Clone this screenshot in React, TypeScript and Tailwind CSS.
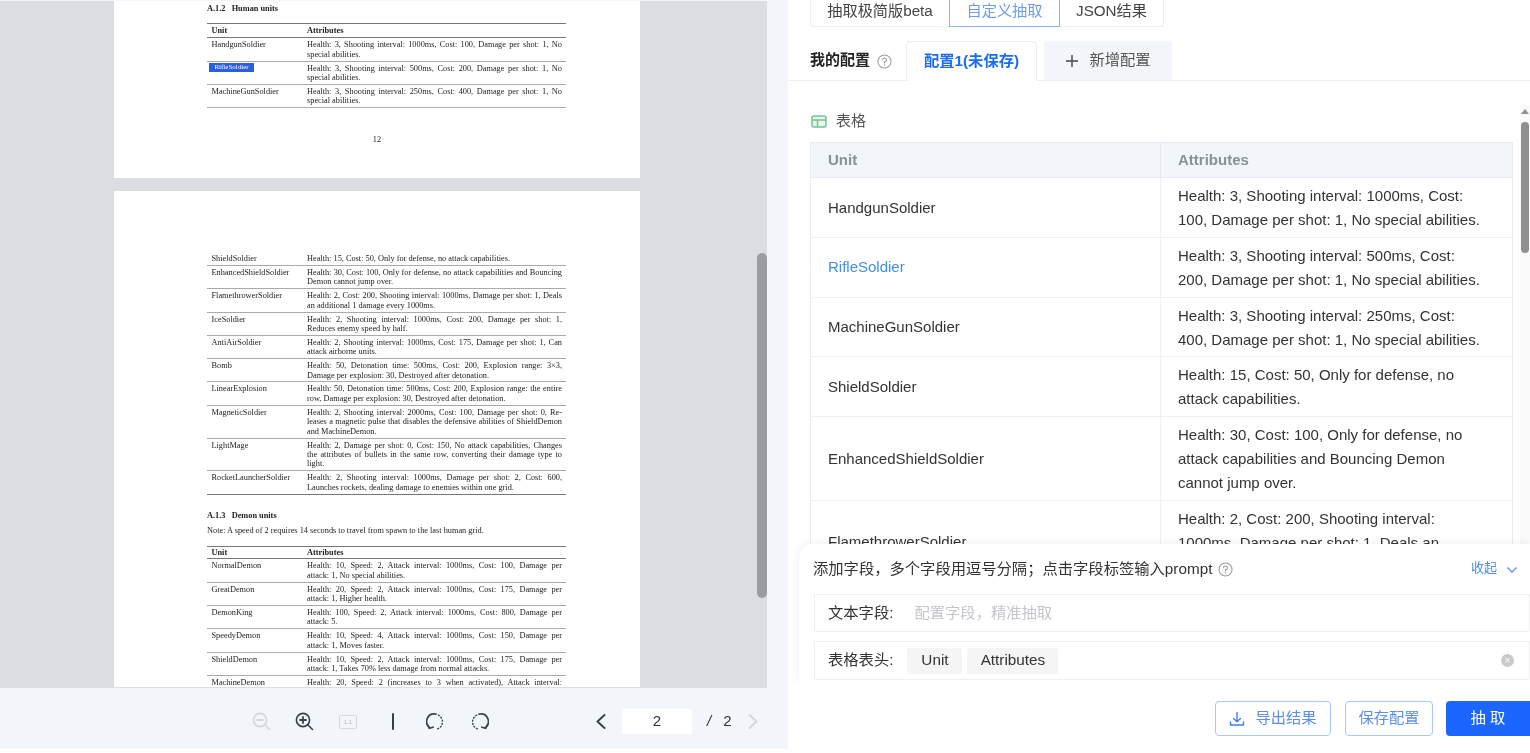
import React from "react";

const sans = "font-['Liberation_Sans','Noto_Sans_CJK_SC',sans-serif]";

type PdfRowData = { name: string; lines: string[]; mark?: boolean };

const human: PdfRowData[] = [
  { name: "HandgunSoldier", lines: ["Health: 3, Shooting interval: 1000ms, Cost: 100, Damage per shot: 1, No", "special abilities."] },
  { name: "RifleSoldier", mark: true, lines: ["Health: 3, Shooting interval: 500ms, Cost: 200, Damage per shot: 1, No", "special abilities."] },
  { name: "MachineGunSoldier", lines: ["Health: 3, Shooting interval: 250ms, Cost: 400, Damage per shot: 1, No", "special abilities."] },
];

const human2: PdfRowData[] = [
  { name: "ShieldSoldier", lines: ["Health: 15, Cost: 50, Only for defense, no attack capabilities."] },
  { name: "EnhancedShieldSoldier", lines: ["Health: 30, Cost: 100, Only for defense, no attack capabilities and Bouncing", "Demon cannot jump over."] },
  { name: "FlamethrowerSoldier", lines: ["Health: 2, Cost: 200, Shooting interval: 1000ms, Damage per shot: 1, Deals", "an additional 1 damage every 1000ms."] },
  { name: "IceSoldier", lines: ["Health: 2, Shooting interval: 1000ms, Cost: 200, Damage per shot: 1,", "Reduces enemy speed by half."] },
  { name: "AntiAirSoldier", lines: ["Health: 2, Shooting interval: 1000ms, Cost: 175, Damage per shot: 1, Can", "attack airborne units."] },
  { name: "Bomb", lines: ["Health: 50, Detonation time: 500ms, Cost: 200, Explosion range: 3×3,", "Damage per explosion: 30, Destroyed after detonation."] },
  { name: "LinearExplosion", lines: ["Health: 50, Detonation time: 500ms, Cost: 200, Explosion range: the entire", "row, Damage per explosion: 30, Destroyed after detonation."] },
  { name: "MagneticSoldier", lines: ["Health: 2, Shooting interval: 2000ms, Cost: 100, Damage per shot: 0, Re-", "leases a magnetic pulse that disables the defensive abilities of ShieldDemon", "and MachineDemon."] },
  { name: "LightMage", lines: ["Health: 2, Damage per shot: 0, Cost: 150, No attack capabilities, Changes", "the attributes of bullets in the same row, converting their damage type to", "light."] },
  { name: "RocketLauncherSoldier", lines: ["Health: 2, Shooting interval: 1000ms, Damage per shot: 2, Cost: 600,", "Launches rockets, dealing damage to enemies within one grid."] },
];

const demons: PdfRowData[] = [
  { name: "NormalDemon", lines: ["Health: 10, Speed: 2, Attack interval: 1000ms, Cost: 100, Damage per", "attack: 1, No special abilities."] },
  { name: "GreatDemon", lines: ["Health: 20, Speed: 2, Attack interval: 1000ms, Cost: 175, Damage per", "attack: 1, Higher health."] },
  { name: "DemonKing", lines: ["Health: 100, Speed: 2, Attack interval: 1000ms, Cost: 800, Damage per", "attack: 5."] },
  { name: "SpeedyDemon", lines: ["Health: 10, Speed: 4, Attack interval: 1000ms, Cost: 150, Damage per", "attack: 1, Moves faster."] },
  { name: "ShieldDemon", lines: ["Health: 10, Speed: 2, Attack interval: 1000ms, Cost: 175, Damage per", "attack: 1, Takes 70% less damage from normal attacks."] },
];

function PdfRow({ row, last }: { row: PdfRowData; last?: boolean }) {
  return (
    <div className={`flex pt-[2px] pb-[1.5px] leading-[9.4px] border-b ${last ? "border-[#777]" : "border-[#aaa]"}`}>
      <div className="w-[100px] shrink-0 pl-[4.5px]">
        {row.mark ? (
          <span className="-ml-[2.5px] -mt-px block w-[45px] bg-[#2a5fe0] text-center text-[7px] leading-[9px] text-white">RifleSoldier</span>
        ) : (
          row.name
        )}
      </div>
      <div className="w-[255px]">
        {row.lines.map((l, i) => (
          <div key={i} className={i < row.lines.length - 1 ? "text-justify [text-align-last:justify]" : ""}>
            {l}
          </div>
        ))}
      </div>
    </div>
  );
}

function PdfHead({ compact }: { compact?: boolean }) {
  return (
    <div className={`flex border-y border-y-[#777] leading-[9.4px] font-bold ${compact ? "py-[1.2px]" : "py-[2px]"}`}>
      <div className="w-[100px] shrink-0 pl-[4.5px]">Unit</div>
      <div>Attributes</div>
    </div>
  );
}

function PdfViewer() {
  return (
    <div className="relative mt-px h-[687px] w-[767px] shrink-0 overflow-hidden bg-[#dcdde2]">
      <div className="flex flex-col gap-[13px] pl-[114px] font-['Liberation_Serif',serif] text-[8.3px] text-[#222] blur-[0.45px]">
        <div className="h-[177px] w-[526px] bg-white pl-[93px] pt-[3px]">
          <div className="h-[19px] w-[359px] font-bold leading-[10px]">A.1.2 &nbsp; Human units</div>
          <div className="w-[359px]">
            <PdfHead />
            {human.map((r) => (
              <PdfRow key={r.name} row={r} />
            ))}
          </div>
          <div className="w-[340px] pt-[26px] text-center">12</div>
        </div>
        <div className="w-[526px] bg-white pl-[93px] pt-[61px]">
          <div className="w-[359px]">
            {human2.map((r, i) => (
              <PdfRow key={r.name} row={r} last={i === human2.length - 1} />
            ))}
          </div>
          <div className="pt-[16px] font-bold leading-[10px]">A.1.3 &nbsp; Demon units</div>
          <div className="pt-[5px] leading-[10px]">Note: A speed of 2 requires 14 seconds to travel from spawn to the last human grid.</div>
          <div className="mt-[10px] w-[359px]">
            <PdfHead compact />
            {demons.map((r) => (
              <PdfRow key={r.name} row={r} />
            ))}
            <div className="flex pt-[2px] leading-[9.4px]">
              <div className="w-[100px] shrink-0 pl-[4.5px]">MachineDemon</div>
              <div className="w-[255px] text-justify [text-align-last:justify]">Health: 20, Speed: 2 (increases to 3 when activated), Attack interval:</div>
            </div>
          </div>
        </div>
      </div>
      <div className="absolute left-[757px] top-[252px] h-[345px] w-[10px] rounded-[5px] bg-[#9b9ca0]" />
    </div>
  );
}

function Mag({ color, plus }: { color: string; plus?: boolean }) {
  return (
    <svg width="19" height="19" viewBox="0 0 19 19" fill="none" stroke={color} strokeWidth="1.6" strokeLinecap="round">
      <circle cx="8" cy="8" r="6.6" />
      <path d="M13 13l4.5 4.5" />
      <path d="M5 8h6" strokeWidth="1.8" />
      {plus && <path d="M8 5v6" strokeWidth="1.8" />}
    </svg>
  );
}

function Rotate({ flip }: { flip?: boolean }) {
  return (
    <svg width="18" height="19" viewBox="0 0 18 19" fill="none" stroke="#3a3f4a" strokeLinecap="round" className={flip ? "-scale-x-100" : ""}>
      <path d="M3.6 15.6A7.6 7.6 0 0 1 9 2a7 7 0 0 1 1 .1" strokeWidth="1.7" />
      <path d="M12.4 3.2a7.6 7.6 0 0 1 2.6 11.2a7.6 7.6 0 0 1-4 2.6" strokeWidth="1.4" strokeDasharray="1 2.2" />
      <path d="M1.5 12.5l1.8 3.7l3.8-1" strokeWidth="1.7" />
    </svg>
  );
}

function Chevron({ color, left }: { color: string; left?: boolean }) {
  return (
    <svg width="12" height="17" viewBox="0 0 12 17" fill="none" stroke={color} strokeWidth="1.9" strokeLinecap="round" strokeLinejoin="round">
      <path d={left ? "M9.5 2L2.5 8.5L9.5 15" : "M2.5 2L9.5 8.5L2.5 15"} />
    </svg>
  );
}

function Toolbar() {
  return (
    <div className={`flex h-[61px] items-center pl-[252px] pt-[6px] ${sans}`}>
      <Mag color="#d2d5da" />
      <div className="ml-[24px]"><Mag color="#3a3f4a" plus /></div>
      <div className="ml-[25px] flex h-[14px] w-[18px] items-center justify-center rounded-[2px] border-[1.5px] border-[#d5d8dd] text-[6px] leading-none text-[#b8bbc0]">1:1</div>
      <div className="ml-[35px] h-[17px] w-[2px] rounded bg-[#3a3f4a]" />
      <div className="ml-[32px]"><Rotate /></div>
      <div className="ml-[27px]"><Rotate flip /></div>
      <div className="ml-[106px]"><Chevron color="#3a3f4a" left /></div>
      <div className="ml-[15px] flex h-[25px] w-[70px] items-center justify-center bg-white text-[15px] text-[#333]">2</div>
      <div className="ml-[15px] text-[15px] italic text-[#333]">/</div>
      <div className="ml-[12px] text-[15px] text-[#333]">2</div>
      <div className="ml-[15px]"><Chevron color="#d2d5da" /></div>
    </div>
  );
}

function Help({ size = 15 }: { size?: number }) {
  return (
    <svg width={size} height={size} viewBox="0 0 16 16" fill="none" stroke="#9a9a9a">
      <circle cx="8" cy="8" r="7" strokeWidth="1.1" />
      <path d="M5.9 6.2A2.1 2.1 0 1 1 8 8.4v1.2" strokeWidth="1.1" strokeLinecap="round" />
      <circle cx="8" cy="11.7" r="0.7" fill="#9a9a9a" stroke="none" />
    </svg>
  );
}

const tableRows: { name: string; attr: string; link?: boolean }[] = [
  { name: "HandgunSoldier", attr: "Health: 3, Shooting interval: 1000ms, Cost: 100, Damage per shot: 1, No special abilities." },
  { name: "RifleSoldier", link: true, attr: "Health: 3, Shooting interval: 500ms, Cost: 200, Damage per shot: 1, No special abilities." },
  { name: "MachineGunSoldier", attr: "Health: 3, Shooting interval: 250ms, Cost: 400, Damage per shot: 1, No special abilities." },
  { name: "ShieldSoldier", attr: "Health: 15, Cost: 50, Only for defense, no attack capabilities." },
  { name: "EnhancedShieldSoldier", attr: "Health: 30, Cost: 100, Only for defense, no attack capabilities and Bouncing Demon cannot jump over." },
  { name: "FlamethrowerSoldier", attr: "Health: 2, Cost: 200, Shooting interval: 1000ms, Damage per shot: 1, Deals an additional 1 damage every 1000ms." },
];

function DataTable() {
  return (
    <div className="ml-[22px] mt-[11px] w-[703px] border-x border-t border-[#e9ecf1] text-[15px]">
      <div className="flex h-[35px] items-center border-b border-[#e9ecf1] bg-[#f2f5fa] font-bold text-[#8a8f99]">
        <div className="flex h-full w-[350px] items-center border-r border-[#e4e7ec] pl-[17px]">Unit</div>
        <div className="pl-[17px]">Attributes</div>
      </div>
      {tableRows.map((r) => (
        <div key={r.name} className="flex border-b border-[#eef0f3] text-[#333]">
          <div className={`flex w-[350px] shrink-0 items-center border-r border-[#eef0f3] pl-[17px] pt-px ${r.link ? "text-[#3d8ff0]" : ""}`}>{r.name}</div>
          <div className="w-[326px] pb-[4.75px] pl-[17px] pt-[6px] leading-[24px]">{r.attr}</div>
        </div>
      ))}
    </div>
  );
}

function AddFieldPanel() {
  return (
    <div className="absolute bottom-0 left-[11px] right-0 top-[544px] rounded-tl-[14px] bg-white pl-[15px] shadow-[-2px_-2px_8px_rgba(0,0,0,0.05)]">
      <div className="-ml-px flex h-[50px] items-center pt-px text-[15.3px] text-[#333]">
        <span>添加字段，多个字段用逗号分隔；点击字段标签输入prompt</span>
        <span className="ml-[6px]"><Help /></span>
        <span className="ml-auto -mt-[3px] text-[13px] text-[#4a8df0]">收起</span>
        <svg className="ml-[9px] mr-[12px]" width="12" height="8" viewBox="0 0 12 8" fill="none" stroke="#4a8df0" strokeWidth="1.2"><path d="M1.5 1.5L6 6.2L10.5 1.5" /></svg>
      </div>
      <div className="flex h-[38px] items-center border border-[#eef0f3] pl-[13px] text-[15.3px]">
        <span className="text-[#333]">文本字段:</span>
        <span className="ml-[21px] text-[#c4c6ca]">配置字段，精准抽取</span>
      </div>
      <div className="mt-[9px] flex h-[39px] items-center border border-[#eef0f3] pl-[13px] text-[15.3px] text-[#333]">
        <span>表格表头:</span>
        <span className="ml-[14px] flex h-[26px] w-[55px] items-center justify-center rounded-[2px] bg-[#f5f5f5]">Unit</span>
        <span className="ml-[5px] flex h-[26px] w-[91px] items-center justify-center rounded-[2px] bg-[#f5f5f5]">Attributes</span>
        <span className="ml-auto mr-[15px] flex h-[13px] w-[13px] items-center justify-center rounded-full bg-[#c9cacc] text-[10px] leading-none text-white">×</span>
      </div>
    </div>
  );
}

function RightPanel() {
  return (
    <div className={`flex h-full flex-1 flex-col bg-white ${sans}`}>
      <div className="relative h-[683px] overflow-hidden">
        <div className="ml-[22px] flex h-[27px] w-[354px] items-stretch rounded-b-[3px] border border-t-0 border-[#efefef] text-[15.2px] text-[#444]">
          <div className="flex w-[138px] items-center justify-center pb-[3px]">抽取极简版beta</div>
          <div className="mb-[-1px] flex w-[111px] items-center justify-center border border-t-0 border-[#8db1f5] pb-[3px] text-[#6d9cf2]">自定义抽取</div>
          <div className="flex flex-1 items-center justify-center pb-[3px]">JSON结果</div>
        </div>
        <div className="mt-[14px] flex h-[40px] items-end border-b border-[#eceef2] pl-[22px]">
          <div className="flex h-[39px] items-center text-[15px] font-bold text-[#222]">我的配置</div>
          <div className="mb-[11px] ml-[7px]"><Help /></div>
          <div className="mb-[-1px] ml-[14px] flex h-[40px] w-[131px] items-center justify-center rounded-t-[4px] border border-b-0 border-[#eceef2] bg-white text-[15.3px] font-bold text-[#1a6cf5]">配置1(未保存)</div>
          <div className="ml-[7px] flex h-[39px] w-[128px] items-center justify-center gap-[10px] rounded-t-[4px] bg-[#f2f5fa] text-[15.3px] text-[#555]">
            <svg width="14" height="14" viewBox="0 0 14 14" stroke="#444" strokeWidth="1.4"><path d="M7 1v12M1 7h12" /></svg>
            新增配置
          </div>
        </div>
        <div className="mt-[30px] flex h-[20px] items-center pl-[23px] text-[15px] text-[#555]">
          <svg width="16" height="13" viewBox="0 0 16 13" fill="none" stroke="#6fc592" strokeWidth="1.5">
            <rect x="1" y="1" width="14" height="11" rx="2" fill="#eaf7ef" />
            <path d="M1 5h14M6.5 5v7" />
          </svg>
          <span className="ml-[9px]">表格</span>
        </div>
        <DataTable />
        <div className="absolute right-0 top-[105px] bottom-0 w-[10px] bg-[#fafafa]">
          <div className="mx-auto mt-[4px] h-0 w-0 border-x-[4px] border-b-[5px] border-x-transparent border-b-[#8f8f8f]" />
          <div className="mx-auto mt-[8px] h-[131px] w-[8px] rounded-[4px] bg-[#8f8f8f]" />
        </div>
        <AddFieldPanel />
      </div>
      <div className="flex justify-end pt-[18px] text-[15.3px]">
        <div className="flex h-[35px] w-[116px] items-center justify-center gap-[10px] rounded-[4px] border border-[#a9c6fa] text-[#5b8fe8]">
          <svg width="16" height="16" viewBox="0 0 16 16" fill="none" stroke="#3f7fe8" strokeWidth="1.4" strokeLinecap="round" strokeLinejoin="round">
            <path d="M8 1.5v9M4.5 7.5L8 10.8l3.5-3.3M1.5 11v3h13v-3" />
          </svg>
          导出结果
        </div>
        <div className="ml-[14px] flex h-[35px] w-[88px] items-center justify-center rounded-[4px] border border-[#a9c6fa] text-[#5b8fe8]">保存配置</div>
        <div className="ml-[13px] flex h-[35px] w-[84px] items-center justify-center rounded-l-[4px] bg-[#1a66ff] text-white">抽 取</div>
      </div>
    </div>
  );
}

export default function App() {
  return (
    <div className="flex h-[753px] w-[1530px] overflow-hidden bg-white blur-[0.3px]">
      <div className="flex h-[749px] w-[788px] shrink-0 flex-col bg-[#f2f5fa]">
        <PdfViewer />
        <Toolbar />
      </div>
      <RightPanel />
    </div>
  );
}
